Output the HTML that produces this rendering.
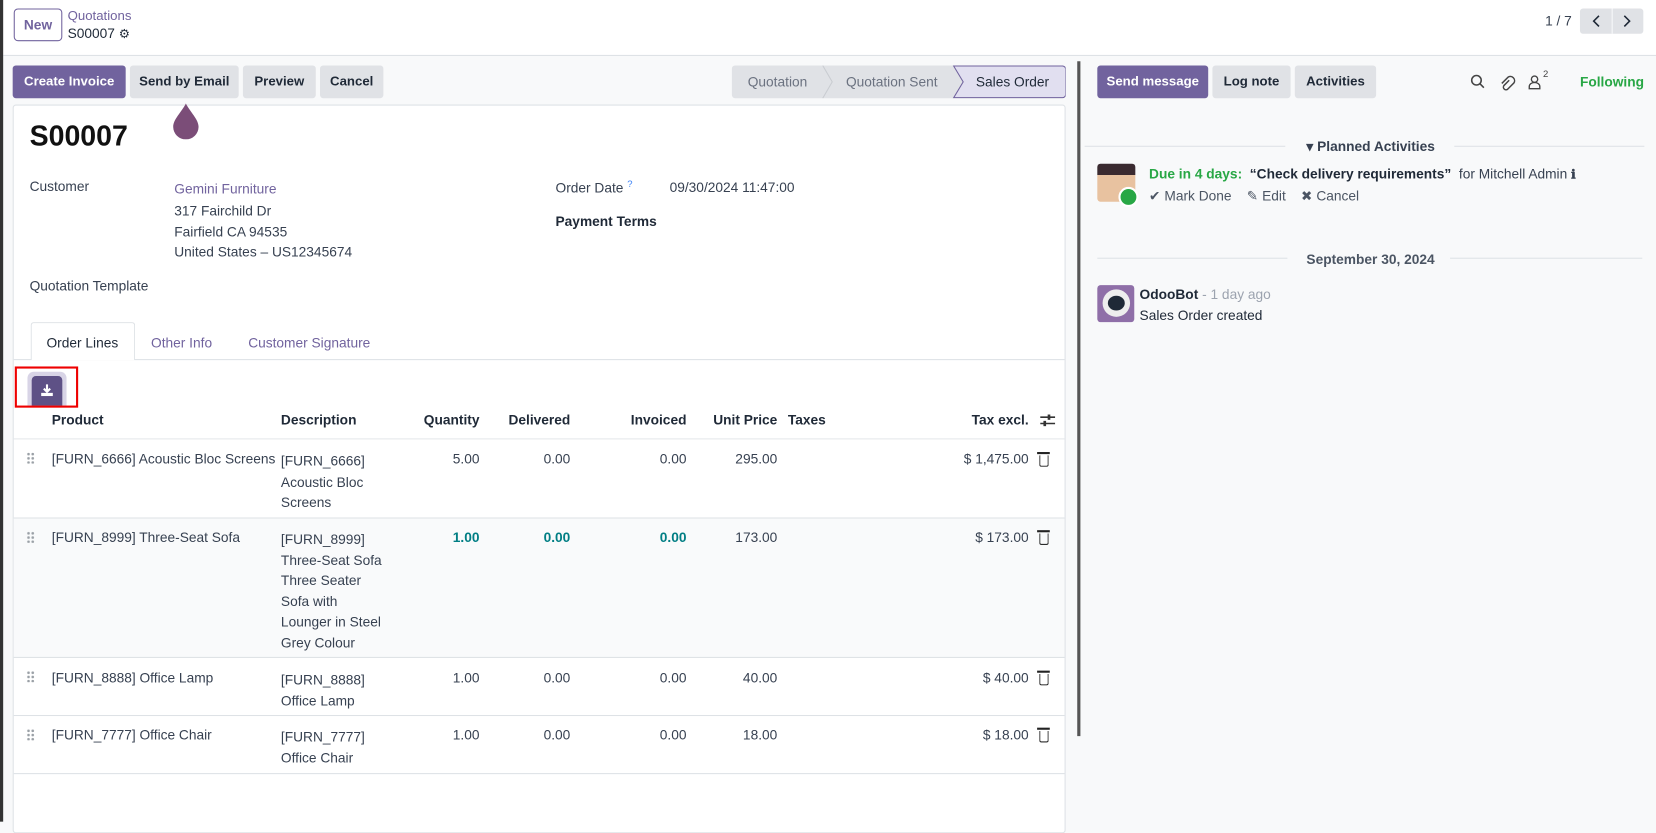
<!DOCTYPE html>
<html><head><meta charset="utf-8"><style>
*{box-sizing:border-box;margin:0;padding:0}
body{width:1656px;height:778px;overflow:hidden;background:#f8f9fa;font-family:"Liberation Sans",sans-serif;font-size:13px;color:#374151;position:relative}
#w{position:absolute;left:0;top:0;width:1568px;height:737px;transform:scale(1.05612);transform-origin:0 0}
.a{position:absolute;white-space:nowrap}
.btn{position:absolute;height:31px;line-height:31px;border-radius:3px;background:#e0e2e6;color:#1f2937;font-weight:bold;text-align:center;font-size:12.5px}
.p{background:#71639e;color:#fff}
.r{text-align:right}
.lnk{color:#71639e}
.hd{font-weight:bold;color:#1f2937}
.hl{position:absolute;height:1px;background:#dee2e6}
.trash{position:absolute;width:9px;height:11px;border:1.5px solid #222;border-top:none;border-radius:0 0 2px 2px}
.trash:before{content:"";position:absolute;left:-3px;top:-3px;width:12px;height:1.5px;background:#222}
.drag{position:absolute;width:8px;height:11px;background:radial-gradient(circle,#9aa0a6 1.2px,transparent 1.4px) 0 0/4px 4px}
</style></head><body><div id="w">
<div class="a" style="left:0;top:0;width:3px;height:778px;background:#333"></div>
<div class="a" style="left:3px;top:0;width:1653px;height:53px;background:#fff;border-bottom:1px solid #dee2e6"></div>
<div class="a" style="left:13px;top:8px;width:46px;height:31px;border:1px solid #71639e;border-radius:4px;color:#71639e;font-weight:bold;text-align:center;line-height:29px">New</div>
<div class="a lnk" style="left:64px;top:8px;font-size:12.5px">Quotations</div>
<div class="a" style="left:64px;top:24px;font-size:13px;color:#1f2937">S00007 <span style="font-size:12px">⚙</span></div>
<div class="a" style="left:1463px;top:12px;color:#374151">1 / 7</div>
<div class="a" style="left:1496px;top:8px;width:60px;height:24px;background:#e0e2e6;border-radius:3px"></div>
<div class="a" style="left:1526px;top:8px;width:1px;height:24px;background:#f8f9fa"></div>
<svg class="a" style="left:1496px;top:8px" width="60" height="24"><path d="M18 7l-5 5 5 5M42 7l5 5-5 5" fill="none" stroke="#1f2937" stroke-width="1.5"/></svg>
<div class="btn p" style="left:12px;top:62px;width:107px">Create Invoice</div>
<div class="btn" style="left:123px;top:62px;width:103px">Send by Email</div>
<div class="btn" style="left:230px;top:62px;width:69px">Preview</div>
<div class="btn" style="left:303px;top:62px;width:60px">Cancel</div>
<div class="a" style="left:693px;top:62px;width:316px;height:31px;background:#e0e2e6;border-radius:3px"></div>
<svg class="a" style="left:693px;top:62px" width="316" height="31"><path d="M210 0.5H313a3 3 0 0 1 3 3V27.5a3 3 0 0 1-3 3H210l9-15z" fill="#e1dff0" stroke="#71639e"/><path d="M86 0l9 15.5-9 15.5" fill="none" stroke="#c9ccd1"/></svg>
<div class="a" style="left:708px;top:70px;color:#6b7280">Quotation</div>
<div class="a" style="left:801px;top:70px;color:#6b7280">Quotation Sent</div>
<div class="a" style="left:924px;top:70px;color:#1f2937">Sales Order</div>
<div class="a" style="left:12px;top:99px;width:997px;height:690px;background:#fff;border:1px solid #dee2e6;border-radius:3px"></div>
<svg class="a" style="left:162px;top:96px" width="28" height="36"><path d="M14 2C10 10 2 17 2 24a12 12 0 0 0 24 0C26 17 18 10 14 2z" fill="#7b4d78"/></svg>
<div class="a" style="left:28px;top:114px;font-size:27px;font-weight:bold;color:#111">S00007</div>
<div class="a hd" style="left:28px;top:169px;font-weight:normal;color:#374151">Customer</div>
<div class="a lnk" style="left:165px;top:171px">Gemini Furniture</div>
<div class="a" style="left:165px;top:192px">317 Fairchild Dr</div>
<div class="a" style="left:165px;top:212px">Fairfield CA 94535</div>
<div class="a" style="left:165px;top:231px">United States – US12345674</div>
<div class="a" style="left:28px;top:263px">Quotation Template</div>
<div class="a" style="left:526px;top:169px">Order Date <sup style="color:#3b82f6;font-size:9px">?</sup></div>
<div class="a" style="left:634px;top:170px">09/30/2024 11:47:00</div>
<div class="a hd" style="left:526px;top:202px">Payment Terms</div>
<div class="hl" style="left:13px;top:340px;width:995px"></div>
<div class="a" style="left:29px;top:305px;width:99px;height:36px;background:#fff;border:1px solid #dee2e6;border-bottom:none;border-radius:3px 3px 0 0"></div>
<div class="a" style="left:44px;top:317px;color:#1f2937">Order Lines</div>
<div class="a lnk" style="left:143px;top:317px">Other Info</div>
<div class="a lnk" style="left:235px;top:317px">Customer Signature</div>
<div class="a" style="left:14px;top:347px;width:60px;height:39px;border:2px solid #e00"></div>
<div class="a" style="left:26px;top:352px;width:37px;height:32px;background:#d8d4e6;border-radius:6px 6px 0 0"></div>
<div class="a" style="left:30px;top:356px;width:29px;height:28px;background:#5e5186;border-radius:4px 4px 0 0"></div>
<svg class="a" style="left:38px;top:363px" width="13" height="13"><path d="M6.5 1v6M3.5 5l3 3 3-3" stroke="#fff" stroke-width="2" fill="none"/><rect x="1" y="9" width="11" height="3" fill="#fff"/></svg>
<div class="a hd" style="left:49px;top:390px">Product</div>
<div class="a hd" style="left:266px;top:390px">Description</div>
<div class="a hd r" style="left:354px;top:390px;width:100px">Quantity</div>
<div class="a hd r" style="left:440px;top:390px;width:100px">Delivered</div>
<div class="a hd r" style="left:550px;top:390px;width:100px">Invoiced</div>
<div class="a hd r" style="left:636px;top:390px;width:100px">Unit Price</div>
<div class="a hd" style="left:746px;top:390px">Taxes</div>
<div class="a hd r" style="left:874px;top:390px;width:100px">Tax excl.</div>
<svg class="a" style="left:984px;top:391px" width="16" height="14"><path d="M1 4h14M1 10h14" stroke="#333" stroke-width="1.5"/><rect x="8" y="1.5" width="2.5" height="5" fill="#333"/><rect x="4" y="7.5" width="2.5" height="5" fill="#333"/></svg>
<div class="hl" style="left:13px;top:415px;width:995px"></div>
<div class="drag" style="left:25px;top:428px"></div>
<div class="a" style="left:49px;top:427px">[FURN_6666] Acoustic Bloc Screens</div>
<div class="a" style="left:266px;top:427px;line-height:19.5px;white-space:normal;width:100px">[FURN_6666] Acoustic Bloc Screens</div>
<div class="a r" style="left:354px;top:427px;width:100px">5.00</div>
<div class="a r" style="left:440px;top:427px;width:100px">0.00</div>
<div class="a r" style="left:550px;top:427px;width:100px">0.00</div>
<div class="a r" style="left:636px;top:427px;width:100px">295.00</div>
<div class="a r" style="left:874px;top:427px;width:100px">$ 1,475.00</div>
<div class="trash" style="left:984px;top:431px"></div>
<div class="hl" style="left:13px;top:490px;width:995px"></div>
<div class="a" style="left:13px;top:491px;width:995px;height:131px;background:#f9fafb"></div>
<div class="drag" style="left:25px;top:503px"></div>
<div class="a" style="left:49px;top:501px">[FURN_8999] Three-Seat Sofa</div>
<div class="a" style="left:266px;top:501px;line-height:19.5px;white-space:normal;width:100px">[FURN_8999] Three-Seat Sofa Three Seater Sofa with Lounger in Steel Grey Colour</div>
<div class="a r" style="left:354px;top:501px;width:100px;color:#017e84;font-weight:bold">1.00</div>
<div class="a r" style="left:440px;top:501px;width:100px;color:#017e84;font-weight:bold">0.00</div>
<div class="a r" style="left:550px;top:501px;width:100px;color:#017e84;font-weight:bold">0.00</div>
<div class="a r" style="left:636px;top:501px;width:100px">173.00</div>
<div class="a r" style="left:874px;top:501px;width:100px">$ 173.00</div>
<div class="trash" style="left:984px;top:505px"></div>
<div class="hl" style="left:13px;top:622px;width:995px"></div>
<div class="drag" style="left:25px;top:635px"></div>
<div class="a" style="left:49px;top:634px">[FURN_8888] Office Lamp</div>
<div class="a" style="left:266px;top:634px;line-height:19.5px;white-space:normal;width:100px">[FURN_8888] Office Lamp</div>
<div class="a r" style="left:354px;top:634px;width:100px">1.00</div>
<div class="a r" style="left:440px;top:634px;width:100px">0.00</div>
<div class="a r" style="left:550px;top:634px;width:100px">0.00</div>
<div class="a r" style="left:636px;top:634px;width:100px">40.00</div>
<div class="a r" style="left:874px;top:634px;width:100px">$ 40.00</div>
<div class="trash" style="left:984px;top:638px"></div>
<div class="hl" style="left:13px;top:677px;width:995px"></div>
<div class="drag" style="left:25px;top:690px"></div>
<div class="a" style="left:49px;top:688px">[FURN_7777] Office Chair</div>
<div class="a" style="left:266px;top:688px;line-height:19.5px;white-space:normal;width:100px">[FURN_7777] Office Chair</div>
<div class="a r" style="left:354px;top:688px;width:100px">1.00</div>
<div class="a r" style="left:440px;top:688px;width:100px">0.00</div>
<div class="a r" style="left:550px;top:688px;width:100px">0.00</div>
<div class="a r" style="left:636px;top:688px;width:100px">18.00</div>
<div class="a r" style="left:874px;top:688px;width:100px">$ 18.00</div>
<div class="trash" style="left:984px;top:692px"></div>
<div class="hl" style="left:13px;top:732px;width:995px"></div>
<div class="a" style="left:1020px;top:58px;width:3px;height:639px;background:#555"></div>
<div class="btn p" style="left:1039px;top:62px;width:105px">Send message</div>
<div class="btn" style="left:1148px;top:62px;width:74px">Log note</div>
<div class="btn" style="left:1226px;top:62px;width:77px">Activities</div>
<svg class="a" style="left:1391px;top:69px" width="80" height="18"><circle cx="7" cy="7" r="4.5" fill="none" stroke="#444" stroke-width="1.5"/><path d="M10.5 10.5l3.5 3.5" stroke="#444" stroke-width="1.5"/><path d="M40 7l-5 5a2.5 2.5 0 0 0 3.5 3.5l6-6a4 4 0 0 0-5.5-5.5l-6 6" fill="none" stroke="#444" stroke-width="1.4" transform="translate(-2,0)"/><circle cx="62" cy="6" r="3" fill="none" stroke="#444" stroke-width="1.3"/><path d="M57 15v-2a5 4 0 0 1 10 0v2z" fill="none" stroke="#444" stroke-width="1.3"/></svg>
<div class="a" style="left:1461px;top:65px;font-size:9px;color:#444">2</div>
<div class="a" style="left:1496px;top:70px;color:#28a745;font-weight:bold">Following</div>
<div class="hl" style="left:1027px;top:138px;width:190px"></div>
<div class="hl" style="left:1377px;top:138px;width:180px"></div>
<div class="a hd" style="left:1237px;top:131px;color:#374151">▾ Planned Activities</div>
<div class="a" style="left:1039px;top:155px;width:36px;height:36px;border-radius:3px;background:linear-gradient(#3a2a30 30%,#e8c2a0 30%)"></div>
<div class="a" style="left:1059px;top:177px;width:19px;height:19px;border-radius:50%;background:#28a745;border:2px solid #fff"></div>
<div class="a" style="left:1088px;top:157px;font-weight:bold"><span style="color:#28a745">Due in 4 days:</span>&nbsp; <span style="color:#1f2937">“Check delivery requirements”</span>&nbsp; <span style="font-weight:normal;color:#374151">for Mitchell Admin</span> <span style="font-size:12px">ℹ</span></div>
<div class="a" style="left:1088px;top:178px;color:#4b5563">✔ Mark Done &nbsp;&nbsp; ✎ Edit &nbsp;&nbsp; ✖ Cancel</div>
<div class="hl" style="left:1039px;top:244px;width:180px"></div>
<div class="hl" style="left:1373px;top:244px;width:182px"></div>
<div class="a hd" style="left:1237px;top:238px;color:#4b5563">September 30, 2024</div>
<div class="a" style="left:1039px;top:270px;width:35px;height:35px;border-radius:3px;background:#8f6fa8"></div>
<div class="a" style="left:1044px;top:274px;width:26px;height:26px;border-radius:50%;background:#eee"></div>
<div class="a" style="left:1049px;top:280px;width:16px;height:14px;border-radius:50%;background:#1f2937"></div>
<div class="a" style="left:1079px;top:271px"><b style="color:#1f2937">OdooBot</b> <span style="color:#9ca3af">- 1 day ago</span></div>
<div class="a" style="left:1079px;top:291px;color:#1f2937">Sales Order created</div>
</div></body></html>
